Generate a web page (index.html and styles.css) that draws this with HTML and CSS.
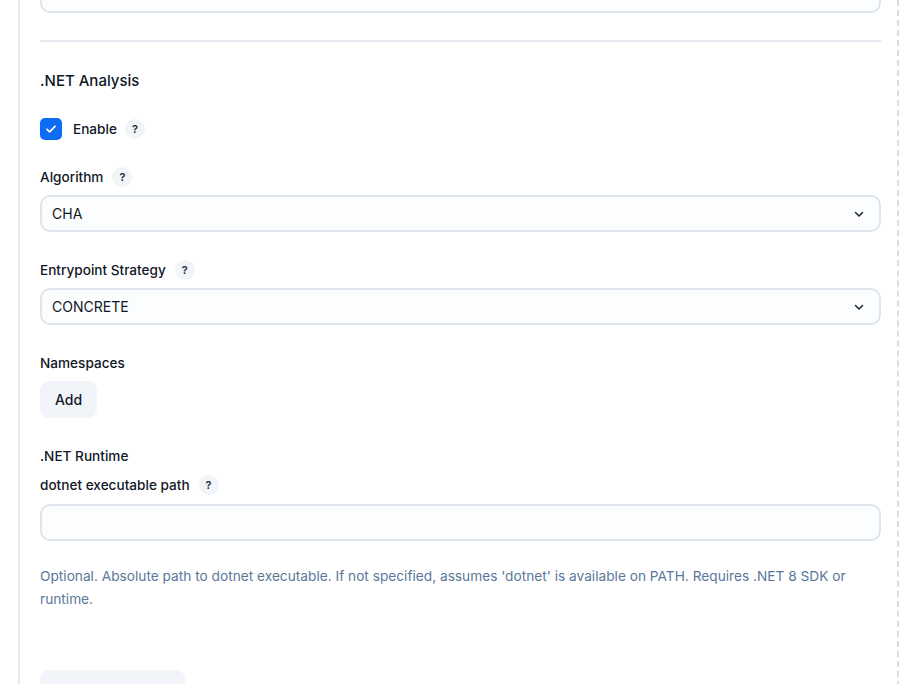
FILE: index.html
```html
<!DOCTYPE html>
<html lang="en">
<head>
    <meta charset="UTF-8">
    <meta name="viewport" content="width=device-width, initial-scale=1.0">
    <title>Analysis Settings</title>
    <link rel="stylesheet" href="styles.css">
</head>
<body>
    <div class="panel">
        <!-- tail of the previous section -->
        <input type="text" class="text-input prev-input">

        <hr class="divider">

        <!-- .NET analysis section -->
        <h3 class="section-title">.NET Analysis</h3>

        <label class="check-row">
            <span class="checkbox">
                <svg width="14" height="14" viewBox="0 0 14 14"><path d="M3 7.3l2.6 2.5L11 4.3" fill="none" stroke="#fff" stroke-width="1.8" stroke-linecap="round" stroke-linejoin="round"/></svg>
            </span>
            <span class="check-text">Enable</span>
            <span class="help">?</span>
        </label>

        <div class="field-label first">Algorithm <span class="help">?</span></div>
        <div class="select">
            <span>CHA</span>
            <svg class="chevron" width="12" height="12" viewBox="0 0 12 12"><path d="M2.5 4.5L6 8l3.5-3.5" fill="none" stroke="#1f2937" stroke-width="1.6" stroke-linecap="round" stroke-linejoin="round"/></svg>
        </div>

        <div class="field-label">Entrypoint Strategy <span class="help">?</span></div>
        <div class="select">
            <span>CONCRETE</span>
            <svg class="chevron" width="12" height="12" viewBox="0 0 12 12"><path d="M2.5 4.5L6 8l3.5-3.5" fill="none" stroke="#1f2937" stroke-width="1.6" stroke-linecap="round" stroke-linejoin="round"/></svg>
        </div>

        <div class="field-label">Namespaces</div>
        <button class="btn-light">Add</button>

        <div class="field-label runtime">.NET Runtime</div>
        <div class="field-label sub">dotnet executable path <span class="help">?</span></div>
        <input type="text" class="text-input">

        <p class="hint">Optional. Absolute path to dotnet executable. If not specified, assumes 'dotnet' is available on PATH. Requires .NET 8 SDK or runtime.</p>

        <button class="btn-light wide"></button>
    </div>
</body>
</html>
```

FILE: styles.css
```css
body {
    margin: 0;
    padding: 0;
    background-color: #ffffff;
    font-family: Inter, "Noto Sans", Arial, sans-serif;
    color: #111827;
    overflow: hidden;
}

/* Settings panel */
.panel {
    margin-left: 18px;
    width: 841px;
    min-height: 700px;
    border-left: 2px solid #e3e8ef;
    border-right: 2px dashed #d9dee5;
    padding: 0 16px 0 20px;
    display: flex;
    flex-direction: column;
    align-items: flex-start;
}

.text-input {
    box-sizing: border-box;
    width: 100%;
    height: 37px;
    margin: 9px 0 0;
    border: 2px solid #dfe5ec;
    border-radius: 10px;
    background: #fcfdfe;
    font: inherit;
}

.prev-input {
    margin-top: -24px;
}

.divider {
    width: 100%;
    height: 2px;
    margin: 27px 0 0;
    border: none;
    background: #e5e9ef;
}

.section-title {
    margin: 27px 0 0;
    font-size: 15px;
    line-height: 24px;
    font-weight: 500;
}

.check-row {
    display: flex;
    align-items: center;
    margin-top: 25px;
    height: 22px;
}

.checkbox {
    width: 22px;
    height: 22px;
    border-radius: 5px;
    background: #0c6df4;
    display: flex;
    align-items: center;
    justify-content: center;
}

.check-text {
    margin-left: 11px;
    font-size: 13.6px;
    font-weight: 500;
}

.help {
    width: 20px;
    height: 20px;
    margin-left: 8px;
    border-radius: 50%;
    background: #f1f4f8;
    font-size: 11px;
    font-weight: 600;
    display: inline-flex;
    align-items: center;
    justify-content: center;
    color: #1f2937;
}

.field-label {
    display: flex;
    align-items: center;
    height: 20px;
    margin-top: 28px;
    font-size: 13.6px;
    font-weight: 500;
}

.field-label.first {
    margin-top: 27px;
}

.field-label .help {
    margin-left: 9px;
}

.field-label.sub {
    margin-top: 9px;
}

.select {
    box-sizing: border-box;
    width: 100%;
    height: 37px;
    margin-top: 8px;
    padding: 0 14px 0 10px;
    border: 2px solid #dfe5ec;
    border-radius: 10px;
    background: #fcfdfe;
    display: flex;
    align-items: center;
    justify-content: space-between;
    font-size: 14px;
}

.btn-light {
    height: 37px;
    margin-top: 8px;
    padding: 0 15px;
    border: none;
    border-radius: 9px;
    background: #f1f5f9;
    font: inherit;
    font-size: 14px;
    font-weight: 500;
    color: #111827;
}

.btn-light.wide {
    width: 145px;
    margin-top: 59px;
}

.hint {
    margin: 24px 0 0;
    font-size: 13.7px;
    line-height: 23px;
    color: #5a7899;
}
```
